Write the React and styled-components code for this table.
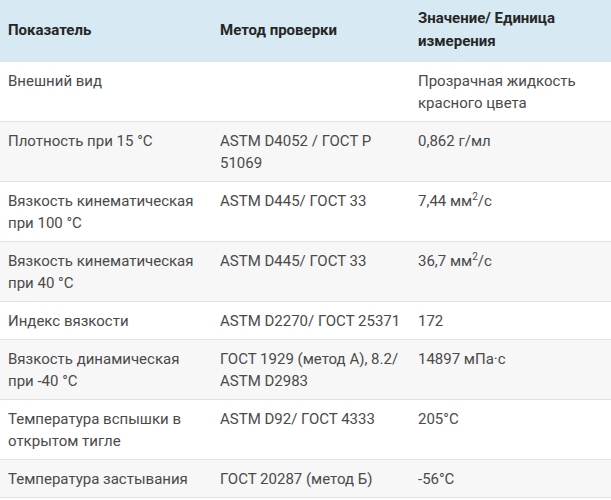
import React from 'react';
import styled, { createGlobalStyle } from 'styled-components';

const GlobalStyle = createGlobalStyle`
    body {
        margin: 0;
        background: #ffffff;
        font-family: Roboto, "Liberation Sans", Arial, sans-serif;
    }
`;

const SpecTable = styled.table`
    width: 611px;
    border-collapse: collapse;
    table-layout: fixed;
    font-size: 15px;
    line-height: 22px;
    color: #4a4a4a;

    col.name { width: 212px; }
    col.method { width: 198px; }
    col.value { width: 201px; }
`;

const HeadCell = styled.th`
    background: #d7e9f2;
    color: #262626;
    font-weight: 700;
    text-align: left;
    vertical-align: middle;
    padding: 7px 8px 8px;
    line-height: 23px;
    border-bottom: 1px solid #e2e2e2;
`;

const Row = styled.tr`
    background: ${props => props.striped ? '#f7f7f7' : '#ffffff'};
    border-bottom: 1px solid #e2e2e2;
`;

const Cell = styled.td`
    text-align: left;
    vertical-align: top;
    padding: 8px 8px 7px;

    sup {
        font-size: 10px;
        line-height: 0;
        vertical-align: 6px;
    }
`;

const rows = [
    ['Внешний вид', '', 'Прозрачная жидкость красного цвета'],
    ['Плотность при 15 °C', 'ASTM D4052 / ГОСТ Р 51069', '0,862 г/мл'],
    ['Вязкость кинематическая при 100 °C', 'ASTM D445/ ГОСТ 33', <>7,44 мм<sup>2</sup>/с</>],
    ['Вязкость кинематическая при 40 °C', 'ASTM D445/ ГОСТ 33', <>36,7 мм<sup>2</sup>/с</>],
    ['Индекс вязкости', 'ASTM D2270/ ГОСТ 25371', '172'],
    ['Вязкость динамическая при -40 °C', 'ГОСТ 1929 (метод А), 8.2/ ASTM D2983', '14897 мПа·с'],
    ['Температура вспышки в открытом тигле', 'ASTM D92/ ГОСТ 4333', '205°C'],
    ['Температура застывания', 'ГОСТ 20287 (метод Б)', '-56°C'],
];

const App = () => (
    <>
        <GlobalStyle />
        <SpecTable>
            <colgroup>
                <col className="name" />
                <col className="method" />
                <col className="value" />
            </colgroup>
            <thead>
                <tr>
                    <HeadCell>Показатель</HeadCell>
                    <HeadCell>Метод проверки</HeadCell>
                    <HeadCell>Значение/ Единица измерения</HeadCell>
                </tr>
            </thead>
            <tbody>
                {rows.map((row, i) => (
                    <Row key={i} striped={i % 2 === 1}>
                        <Cell>{row[0]}</Cell>
                        <Cell>{row[1]}</Cell>
                        <Cell>{row[2]}</Cell>
                    </Row>
                ))}
            </tbody>
        </SpecTable>
    </>
);

export default App;
